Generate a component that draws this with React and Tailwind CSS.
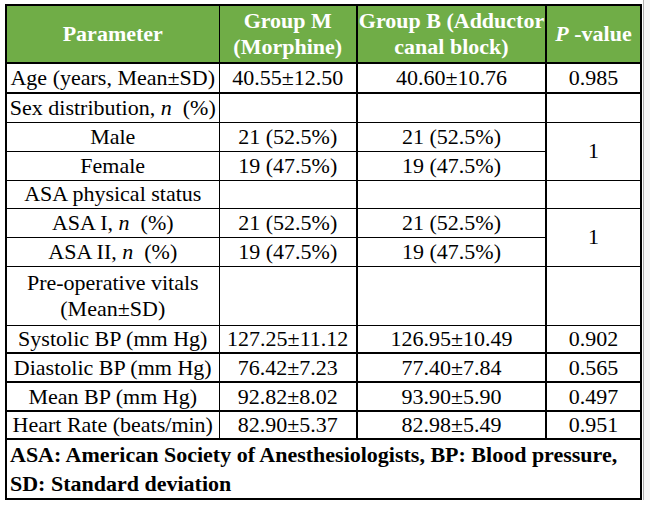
import React from "react";

const rows = [
  { label: "Age (years, Mean±SD)", m: "40.55±12.50", b: "40.60±10.76", p: "0.985", h: "h-[30px]", thick: true },
  { label: <>Sex distribution, <i>n</i>&nbsp; (%)</>, m: "", b: "", p: "", h: "h-[29px]" },
  { label: "Male", m: "21 (52.5%)", b: "21 (52.5%)", p: "1", span: 2, h: "h-[29px]" },
  { label: "Female", m: "19 (47.5%)", b: "19 (47.5%)", skipP: true, h: "h-[29px]" },
  { label: "ASA physical status", m: "", b: "", p: "", h: "h-[28px]" },
  { label: <>ASA I, <i>n</i>&nbsp; (%)</>, m: "21 (52.5%)", b: "21 (52.5%)", p: "1", span: 2, h: "h-[29px]" },
  { label: <>ASA II, <i>n</i>&nbsp; (%)</>, m: "19 (47.5%)", b: "19 (47.5%)", skipP: true, h: "h-[29px]" },
  { label: <>Pre-operative vitals<br />(Mean±SD)</>, m: "", b: "", p: "", h: "h-[59px]" },
  { label: "Systolic BP (mm Hg)", m: "127.25±11.12", b: "126.95±10.49", p: "0.902", h: "h-[28px]", thick: true },
  { label: "Diastolic BP (mm Hg)", m: "76.42±7.23", b: "77.40±7.84", p: "0.565", h: "h-[29px]", thick: true },
  { label: "Mean BP (mm Hg)", m: "92.82±8.02", b: "93.90±5.90", p: "0.497", h: "h-[29px]", thick: true },
  { label: "Heart Rate (beats/min)", m: "82.90±5.37", b: "82.98±5.49", p: "0.951", h: "h-[28px]", thick: true },
];

export default function App() {
  return (
    <div className="flex h-[506px] w-[650px] bg-white font-['Liberation_Serif','Times_New_Roman',serif]">
      <div className="pl-[5px] pt-[4px]">
        <table className="w-[635px] table-fixed border-collapse border-2 border-black text-[22px] leading-[26px] text-black">
          <colgroup>
            <col className="w-[213px]" />
            <col className="w-[138px]" />
            <col className="w-[189px]" />
            <col className="w-[95px]" />
          </colgroup>
          <thead>
            <tr className="h-[58px] border-b-2 border-black bg-[#70ad47] text-[22px] font-bold text-white">
              <th className="border-r border-black">Parameter</th>
              <th className="border-r-2 border-black leading-[26px]">Group M<br />(Morphine)</th>
              <th className="overflow-hidden whitespace-nowrap border-r-2 border-black leading-[26px]">Group B (Adductor<br />canal block)</th>
              <th><i>P</i> -value</th>
            </tr>
          </thead>
          <tbody>
            {rows.map((r, i) => (
              <tr key={i} className={`${r.h} ${r.thick ? "border-b-2" : "border-b"} border-black text-center`}>
                <td className="overflow-visible whitespace-nowrap border-r border-black p-0">{r.label}</td>
                <td className="border-r-2 border-black p-0">{r.m}</td>
                <td className="border-r-2 border-black p-0">{r.b}</td>
                {!r.skipP && (
                  <td rowSpan={r.span || 1} className="border-b border-black p-0">{r.p}</td>
                )}
              </tr>
            ))}
            <tr className="h-[59px]">
              <td colSpan={4} className="whitespace-nowrap px-[3px] pt-0 text-left align-top text-[22px] font-bold leading-[29px]">
                ASA: American Society of Anesthesiologists, BP: Blood pressure,<br />SD: Standard deviation
              </td>
            </tr>
          </tbody>
        </table>
      </div>
      <div className="ml-[1px] h-[500px] w-px bg-[#b0b0b0]" />
      <div className="h-[500px] flex-1 bg-[#f6f6f6]" />
    </div>
  );
}
